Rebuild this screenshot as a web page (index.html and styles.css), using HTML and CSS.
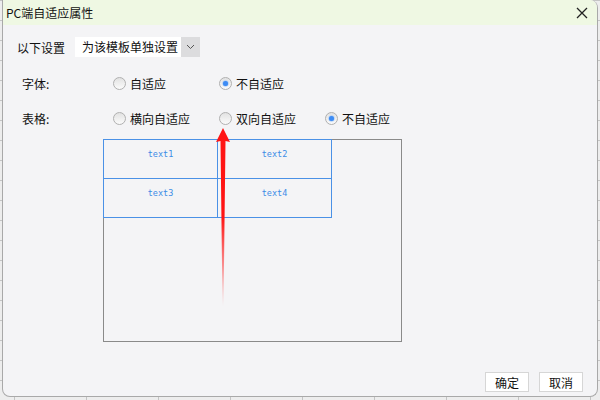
FILE: index.html
```html
<!DOCTYPE html>
<html lang="zh-CN">
<head>
    <meta charset="UTF-8">
    <title>PC端自适应属性</title>
    <link rel="stylesheet" href="styles.css">
</head>
<body>

    <div class="dialog">
        <div class="titlebar">
            <span class="title">PC端自适应属性</span>
            <svg class="close" width="12" height="12" viewBox="0 0 12 12">
                <path d="M1 1 L11 11 M11 1 L1 11" stroke="#222" stroke-width="1.3" fill="none"/>
            </svg>
        </div>

        <div class="content">
            <!-- scope selector -->
            <div class="setting-row">
                <span class="setting-label">以下设置</span>
                <div class="select">
                    <span class="select-value">为该模板单独设置</span>
                    <span class="select-btn">
                        <svg width="9" height="6" viewBox="0 0 9 6">
                            <path d="M1 1 L4.5 4.5 L8 1" stroke="#555" stroke-width="1" fill="none"/>
                        </svg>
                    </span>
                </div>
            </div>

            <div class="field-row font-row">
                <span class="field-label">字体:</span>
                <label class="option"><span class="radio"></span>自适应</label>
                <label class="option"><span class="radio checked"></span>不自适应</label>
            </div>

            <div class="field-row table-row">
                <span class="field-label">表格:</span>
                <label class="option"><span class="radio"></span>横向自适应</label>
                <label class="option"><span class="radio"></span>双向自适应</label>
                <label class="option"><span class="radio checked"></span>不自适应</label>
            </div>

            <!-- preview -->
            <div class="preview">
                <div class="sheet">
                    <div class="cell">text1</div>
                    <div class="cell">text2</div>
                    <div class="cell">text3</div>
                    <div class="cell">text4</div>
                </div>
            </div>
        </div>

        <div class="footer">
            <button class="btn">确定</button>
            <button class="btn">取消</button>
        </div>

        <svg class="arrow" width="22" height="182" viewBox="0 0 22 182">
            <defs>
                <linearGradient id="fade" x1="0" y1="0" x2="0" y2="1">
                    <stop offset="0" stop-color="#ff1414" stop-opacity="1"/>
                    <stop offset="0.5" stop-color="#ff1414" stop-opacity="1"/>
                    <stop offset="1" stop-color="#ff1414" stop-opacity="0"/>
                </linearGradient>
            </defs>
            <polygon points="11,2 18,16 13.5,15 11.5,180 10.5,180 8.5,15 4,16" fill="url(#fade)"/>
        </svg>
    </div>

</body>
</html>
```

FILE: styles.css
```css
* {
    margin: 0;
    padding: 0;
    box-sizing: border-box;
}

body {
    font-family: "Noto Sans CJK SC", "Liberation Sans", sans-serif;
    font-size: 12px;
    color: #111;
    background-color: #ededed;
    background-image:
        linear-gradient(to right, #c4c4c4 1px, transparent 1px),
        linear-gradient(to bottom, #c4c4c4 1px, transparent 1px);
    background-size: 72px 20px;
    background-position: 14px 0;
    width: 600px;
    height: 400px;
    overflow: hidden;
}

.dialog {
    position: relative;
    margin-left: 2px;
    width: 596px;
    height: 397px;
    display: flex;
    flex-direction: column;
    background: #f4f4f6;
    border: 1px solid #a9a9a9;
    border-top: none;
    border-radius: 0 8px 8px 8px;
    overflow: hidden;
}

.titlebar {
    height: 25px;
    display: flex;
    align-items: center;
    justify-content: space-between;
    padding: 0 9px 0 3px;
    background: #eff8e3;
}

.title {
    font-size: 12px;
    line-height: 1;
}

.content {
    flex: 1;
    padding-left: 14px;
}

.setting-row {
    display: flex;
    align-items: center;
    margin-top: 12px;
    height: 20px;
}

.setting-label {
    width: 58px;
}

.select {
    display: flex;
    height: 20px;
}

.select-value {
    width: 106px;
    padding-left: 7px;
    background: #fff;
    line-height: 20px;
    white-space: nowrap;
}

.select-btn {
    width: 19px;
    background: #dcdcde;
    display: flex;
    align-items: center;
    justify-content: center;
}

.field-row {
    display: flex;
    align-items: center;
    height: 20px;
    padding-left: 5px;
}

.font-row {
    margin-top: 16px;
}

.table-row {
    margin-top: 15px;
}

.field-label {
    width: 91px;
}

.option {
    width: 106px;
    display: flex;
    align-items: center;
    gap: 4px;
    white-space: nowrap;
}

.radio {
    width: 13px;
    height: 13px;
    border-radius: 50%;
    border: 1px solid #b0b0b0;
    background: linear-gradient(#e2e2e2, #fbfbfb);
    display: flex;
    align-items: center;
    justify-content: center;
}

.radio.checked::after {
    content: "";
    width: 5px;
    height: 5px;
    border-radius: 50%;
    background: #3d8bf4;
    box-shadow: 0 0 1px 0.5px #8fbdf7;
}

.preview {
    margin: 11px 0 0 86px;
    width: 299px;
    height: 203px;
    border: 1px solid #8a8a8a;
}

.sheet {
    margin: -1px 0 0 -1px;
    width: 229px;
    display: grid;
    grid-template-columns: 114px 114px;
    grid-template-rows: 39px 39px;
    border-top: 1px solid #4a91e6;
    border-left: 1px solid #4a91e6;
}

.cell {
    border-right: 1px solid #4a91e6;
    border-bottom: 1px solid #4a91e6;
    display: flex;
    justify-content: center;
    padding-top: 9px;
    font-family: "DejaVu Sans Mono", monospace;
    font-size: 8.5px;
    color: #3c8ce6;
}

.footer {
    display: flex;
    justify-content: flex-end;
    gap: 10px;
    padding: 0 14px 4px 0;
}

.btn {
    width: 44px;
    height: 20px;
    background: #fff;
    border: 1px solid #d6d6d6;
    font-family: inherit;
    font-size: 12px;
    color: #111;
}

.arrow {
    position: absolute;
    left: 209px;
    top: 126px;
}
```
